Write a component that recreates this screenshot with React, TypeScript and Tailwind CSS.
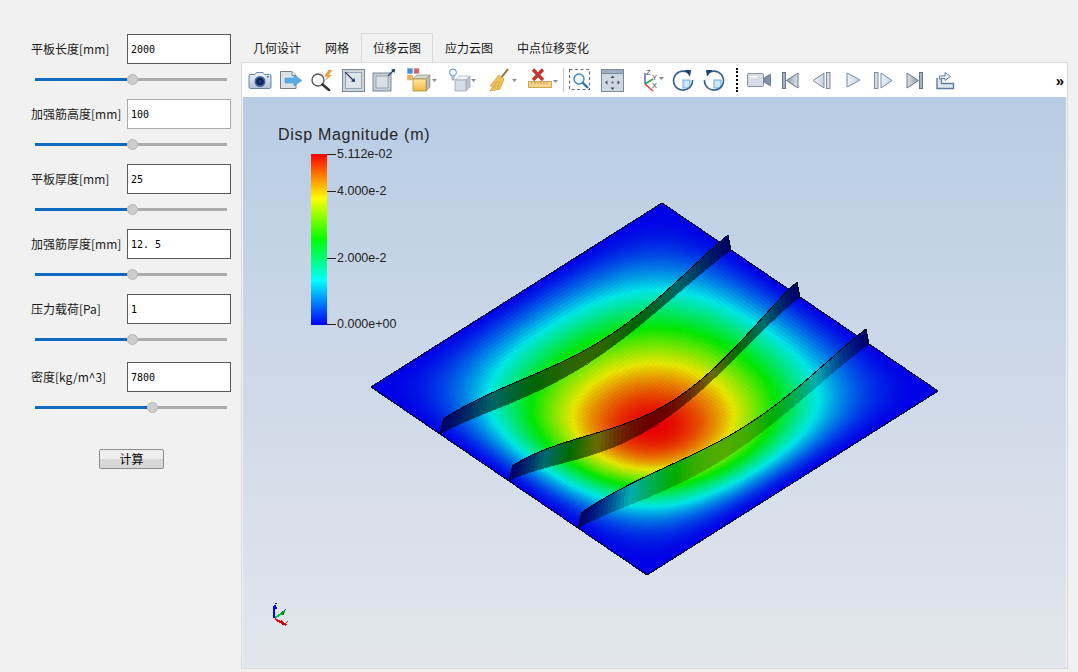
import type { ReactNode } from "react";

const params = [
  { label: "平板长度[mm]", value: "2000", fill: "w-[92px]", top: "mt-[34px]", border: "border-[#5a5a5a]" },
  { label: "加强筋高度[mm]", value: "100", fill: "w-[92px]", top: "mt-[14px]", border: "border-[#ababab]" },
  { label: "平板厚度[mm]", value: "25", fill: "w-[92px]", top: "mt-[14px]", border: "border-[#5a5a5a]" },
  { label: "加强筋厚度[mm]", value: "12. 5", fill: "w-[92px]", top: "mt-[14px]", border: "border-[#5a5a5a]" },
  { label: "压力载荷[Pa]", value: "1", fill: "w-[92px]", top: "mt-[14px]", border: "border-[#5a5a5a]" },
  { label: "密度[kg/m^3]", value: "7800", fill: "w-[112px]", top: "mt-[17px]", border: "border-[#5a5a5a]" },
];

const tabs = ["几何设计", "网格", "位移云图", "应力云图", "中点位移变化"];

// plate corners, in page pixels
const L = [371, 387];
const dS = [276, 188];
const dT = [291, -184];

const field = (s: number, t: number) => Math.pow(Math.max(0, Math.sin(Math.PI * s) * Math.sin(Math.PI * t)), 1.4);

function rainbow(w: number) {
  const stops = [
    [0, 0, 255],
    [0, 255, 255],
    [0, 255, 0],
    [255, 255, 0],
    [255, 0, 0],
  ];
  const x = Math.min(3.999, w * 4);
  const i = Math.floor(x);
  const f = x - i;
  return stops[i].map((c, k) => c + (stops[i + 1][k] - c) * f);
}

const toRgb = (c: number[], k: number) => `rgb(${Math.round(c[0] * k)},${Math.round(c[1] * k)},${Math.round(c[2] * k)})`;

function warp(s: number, t: number) {
  return [L[0] + s * dS[0] + t * dT[0], L[1] + s * dS[1] + t * dT[1] + 37 * field(s, t)];
}

function PlateMesh() {
  const n = 110;
  const quads: ReactNode[] = [];
  for (let i = 0; i < n; i++) {
    for (let j = 0; j < n; j++) {
      const s0 = i / n;
      const s1 = (i + 1) / n;
      const t0 = j / n;
      const t1 = (j + 1) / n;
      const pts = [warp(s0, t0), warp(s1, t0), warp(s1, t1), warp(s0, t1)].map((p) => p.join(",")).join(" ");
      const col = toRgb(rainbow(field((s0 + s1) / 2, (t0 + t1) / 2)), 0.9);
      quads.push(<polygon key={`${i}-${j}`} points={pts} fill={col} stroke={col} strokeWidth={1.2} />);
    }
  }
  return <g shapeRendering="crispEdges">{quads}</g>;
}

function Rib({ s, shade }: { s: number; shade: (t: number) => number }) {
  const m = 70;
  const top = (t: number) => {
    const b = warp(s, t);
    const h = 15 + 6 * Math.sin(Math.PI * s) * Math.sin(2 * Math.PI * t) + 20 * Math.max(0, s - 0.5) * Math.sin(Math.PI * t);
    return [b[0] + 3.5 - 6.5 * t, b[1] - h];
  };
  const quads: ReactNode[] = [];
  for (let j = 0; j < m; j++) {
    const t0 = j / m;
    const t1 = (j + 1) / m;
    const pts = [warp(s, t0), warp(s, t1), top(t1), top(t0)].map((p) => p.join(",")).join(" ");
    const mid = (t0 + t1) / 2;
    const col = toRgb(rainbow(field(s, mid)), shade(mid));
    quads.push(<polygon key={j} points={pts} fill={col} stroke={col} strokeWidth={0.8} />);
  }
  const line: number[][] = [warp(s, 0)];
  for (let j = 0; j <= m; j++) line.push(top(j / m));
  line.push(warp(s, 1));
  return (
    <g shapeRendering="crispEdges">
      {quads}
      <polyline points={line.map((p) => p.join(",")).join(" ")} fill="none" stroke="#0c0c1c" strokeWidth={1} />
    </g>
  );
}

function Scene() {
  return (
    <svg className="absolute inset-0" width={823} height={571} viewBox="243 97 823 571">
      <PlateMesh />
      <polygon points="371,387 647,575 938,391 662,203" fill="none" stroke="#0a0a22" strokeWidth={1} shapeRendering="crispEdges" />
      <Rib s={0.25} shade={() => 0.4} />
      <Rib s={0.5} shade={() => 0.42} />
      <Rib s={0.75} shade={(t) => 0.42 + 0.26 * Math.min(1, Math.sin(Math.PI * t) * 2)} />
      <g shapeRendering="crispEdges">
        <path d="M274 606V618" stroke="#0000ff" strokeWidth={2} />
        <path d="M272.500 609L275 604L277.500 609Z" fill="#0000e0" />
        <path d="M275 603h2v1h-2z" fill="#0000c0" />
        <path d="M275 618L285 611" stroke="#00c832" strokeWidth={2} />
        <path d="M280 613L286 609L283 616Z" fill="#008c28" />
        <path d="M275 619L286 625" stroke="#e01010" strokeWidth={2} />
        <path d="M281 620L288 625L282 625Z" fill="#d00000" />
        <path d="M286 622h1v1h-1zM287 621h1v1h-1z" fill="#d02020" />
      </g>
    </svg>
  );
}

function Legend() {
  const ticks = [
    { y: "top-[57px]", text: "5.112e-02" },
    { y: "top-[94px]", text: "4.000e-2" },
    { y: "top-[161px]", text: "2.000e-2" },
    { y: "top-[227px]", text: "0.000e+00" },
  ];
  return (
    <>
      <div className="absolute left-[35px] top-[28px] font-['Liberation_Sans',sans-serif] text-[16px] leading-[20px] tracking-[0.7px] text-[#262626] whitespace-nowrap">
        Disp Magnitude (m)
      </div>
      <div className="absolute left-[68px] top-[57px] w-[16px] h-[171px] bg-[linear-gradient(to_top,#0000ff_0%,#00ffff_26%,#00ff00_50%,#ffff00_74%,#ff0000_100%)]" />
      {ticks.map((tick) => (
        <div key={tick.text} className={`absolute left-[84px] ${tick.y} flex items-center h-[1px]`}>
          <div className="w-[9px] h-[1px] bg-[#222222]" />
          <span className="ml-[1px] font-['Liberation_Sans',sans-serif] text-[12.500px] text-[#222222] whitespace-nowrap">{tick.text}</span>
        </div>
      ))}
    </>
  );
}

function Param({ item }: { item: (typeof params)[number] }) {
  return (
    <div className={item.top}>
      <div className="flex items-center pl-[31px]">
        <div className="w-[96px] text-[12px] text-[#1a1a1a] whitespace-nowrap">{item.label}</div>
        <div className={`w-[104px] h-[30px] border bg-white flex items-center pl-[3px] font-['DejaVu_Sans_Mono',monospace] text-[10px] text-black ${item.border}`}>
          {item.value}
        </div>
      </div>
      <div className="flex items-center mt-[10px] ml-[35px] w-[192px] h-[11px]">
        <div className={`${item.fill} h-[3px] bg-[#0f69bd]`} />
        <div className="w-[11px] h-[11px] rounded-full bg-[#cdcdcd] border border-[#b3b3b3] shrink-0" />
        <div className="flex-1 h-[3px] bg-[#acacac]" />
      </div>
    </div>
  );
}

const Arrow = ({ x, y }: { x: number; y: number }) => <path d={`M${x} ${y}h5l-2.500 3z`} fill="#8a8a8a" />;

function Defs() {
  return (
    <svg width={0} height={0} className="absolute">
      <defs>
        <linearGradient id="steel" x1="0" y1="0" x2="0" y2="1">
          <stop offset="0" stopColor="#eef2f7" />
          <stop offset="1" stopColor="#b2c0d2" />
        </linearGradient>
        <linearGradient id="grayFill" x1="0" y1="0" x2="1" y2="0">
          <stop offset="0" stopColor="#8d98a8" />
          <stop offset="1" stopColor="#dfe4ea" />
        </linearGradient>
        <linearGradient id="grayFillR" x1="1" y1="0" x2="0" y2="0">
          <stop offset="0" stopColor="#8d98a8" />
          <stop offset="1" stopColor="#dfe4ea" />
        </linearGradient>
        <linearGradient id="paleFill" x1="0" y1="0" x2="1" y2="0">
          <stop offset="0" stopColor="#eef2f7" />
          <stop offset="1" stopColor="#c6d2e0" />
        </linearGradient>
        <linearGradient id="gold" x1="0" y1="0" x2="0" y2="1">
          <stop offset="0" stopColor="#ffe9a0" />
          <stop offset="1" stopColor="#f2b93e" />
        </linearGradient>
      </defs>
    </svg>
  );
}

const icons: { w: string; node: ReactNode }[] = [
  {
    w: "w-[30px]",
    node: (
      <svg width={24} height={20} viewBox="0 0 24 20">
        <path d="M2.500 4.500H7L8.500 2.500H15L16.500 4.500H21.500Q23 4.500 23 6V17Q23 18.500 21.500 18.500H2.500Q1 18.500 1 17V6Q1 4.500 2.500 4.500Z" fill="url(#steel)" stroke="#6583a8" />
        <circle cx={12} cy={11.500} r={5.500} fill="#3a6ba5" />
        <circle cx={12} cy={11.500} r={3.800} fill="#0d2450" />
        <circle cx={12} cy={11.500} r={1.500} fill="#1f4683" />
        <rect x={19} y={6} width={2} height={1.500} fill="#5c6f88" />
      </svg>
    ),
  },
  {
    w: "w-[32px]",
    node: (
      <svg width={24} height={20} viewBox="0 0 24 20">
        <path d="M1.500 1.500H13L17 5.500V18.500H1.500Z" fill="#dde1e6" stroke="#77808a" />
        <path d="M13 1.500V5.500H17" fill="#f3f3f3" stroke="#77808a" />
        <path d="M6 8H15V4.800L23 10.500L15 16V13H6Z" fill="#58ace6" stroke="#4f9ddb" strokeWidth={0.6} />
      </svg>
    ),
  },
  {
    w: "w-[30px]",
    node: (
      <svg width={24} height={22} viewBox="0 0 24 22">
        <circle cx={8} cy={11} r={6} fill="#f8fafc" stroke="#5b5b5b" strokeWidth={1.400} />
        <path d="M12.500 15.500L19 21" stroke="#333333" strokeWidth={2.600} strokeLinecap="round" />
        <path d="M18.500 1L14 7.500H17.500L14.500 12L22 6H18.500L22.500 1Z" fill="#ee9e36" />
      </svg>
    ),
  },
  {
    w: "w-[32px]",
    node: (
      <svg width={23} height={23} viewBox="0 0 23 23">
        <rect x={0.500} y={0.500} width={22} height={22} fill="#ccd4de" stroke="#7d8998" />
        <rect x={3.500} y={3.500} width={16} height={16} fill="#dfe4ea" stroke="#98a4b2" />
        <path d="M3 3L12 12" stroke="#27406b" strokeWidth={1.200} />
        <path d="M9 12.500L13 13L12.500 9Z" fill="#1d3560" />
      </svg>
    ),
  },
  {
    w: "w-[26px]",
    node: (
      <svg width={24} height={24} viewBox="0 0 24 24" className="ml-[3px]">
        <rect x={1} y={5} width={18} height={18} fill="#c5ced9" stroke="#7a8797" />
        <rect x={4} y={8} width={12} height={12} fill="#dbe0e7" stroke="#98a4b2" />
        <path d="M16 8L22 2" stroke="#27406b" strokeWidth={1.200} />
        <path d="M19 1.500L23 1L22.500 5Z" fill="#1d3560" />
      </svg>
    ),
  },
  {
    w: "w-[50px]",
    node: (
      <svg width={30} height={24} viewBox="0 0 30 24" className="ml-[4px]">
        <rect x={0.500} y={0.500} width={5} height={5} fill="#3d8edb" stroke="#7aa7d0" strokeWidth={0.500} />
        <rect x={7} y={0.500} width={5} height={5} fill="#d9646a" stroke="#c39095" strokeWidth={0.500} />
        <rect x={0.500} y={7} width={5} height={5} fill="#f0b45a" stroke="#d3a667" strokeWidth={0.500} />
        <path d="M6 11L10 7H23L19 11Z" fill="#d8d5c4" stroke="#8e8e82" strokeWidth={0.700} />
        <path d="M19 11L23 7V19L19 23Z" fill="#b9b9b0" stroke="#8e8e82" strokeWidth={0.700} />
        <rect x={6} y={11} width={13} height={12} fill="url(#gold)" stroke="#a58c52" strokeWidth={0.800} />
        <Arrow x={25} y={11} />
      </svg>
    ),
  },
  {
    w: "w-[32px]",
    node: (
      <svg width={28} height={24} viewBox="0 0 28 24" className="ml-[2px]">
        <circle cx={5} cy={4.500} r={3.500} fill="#f2f6fb" stroke="#4d9ad6" />
        <path d="M4 8v4h2V8" fill="#c7cfd8" stroke="#7f8a96" strokeWidth={0.600} />
        <path d="M7 12L11 8H22L18 12Z" fill="#eef1f4" stroke="#a7b0ba" strokeWidth={0.700} />
        <path d="M18 12L22 8V19L18 23Z" fill="#bac3cd" stroke="#a0a9b3" strokeWidth={0.700} />
        <rect x={7} y={12} width={11} height={11} fill="#d6dce3" stroke="#a0a9b3" strokeWidth={0.800} />
        <Arrow x={23} y={11} />
      </svg>
    ),
  },
  {
    w: "w-[50px]",
    node: (
      <svg width={28} height={24} viewBox="0 0 28 24" className="ml-[2px]">
        <path d="M19 1L12 10" stroke="#9c6c2a" strokeWidth={2} />
        <path d="M10 7L15 11L11 21L1 23L4 18L1 18Z" fill="#f0c35a" stroke="#c59a3a" strokeWidth={0.700} />
        <path d="M8 13L5 20M11 13L8 21" stroke="#c59a3a" strokeWidth={0.700} />
        <Arrow x={23} y={11} />
      </svg>
    ),
  },
  {
    w: "w-[28px]",
    node: (
      <svg width={30} height={24} viewBox="0 0 30 24" className="ml-[3px]">
        <path d="M5 1.500L15 12M15 1.500L5 12" stroke="#c0392f" strokeWidth={3.400} />
        <rect x={0.500} y={13.500} width={23} height={6} fill="#f5d48a" stroke="#cfa75a" />
        <path d="M4 14v2M7 14v2M10 14v2M13 14v2M16 14v2M19 14v2" stroke="#a98540" strokeWidth={0.700} />
        <Arrow x={25} y={12} />
      </svg>
    ),
  },
  { w: "w-[16px]", node: <div className="w-[1px] h-[24px] bg-[#c9c9c9]" /> },
  {
    w: "w-[18px]",
    node: (
      <svg width={22} height={22} viewBox="0 0 22 22">
        <rect x={0.500} y={0.500} width={20} height={20} fill="none" stroke="#5f6d80" strokeWidth={1.200} strokeDasharray="3 2.500" />
        <circle cx={10} cy={10} r={5} fill="#f3f8fc" stroke="#3f87c4" strokeWidth={1.400} />
        <path d="M13.500 13.500L19 19" stroke="#2f6ea6" strokeWidth={2.400} />
      </svg>
    ),
  },
  {
    w: "w-[46px]",
    node: (
      <svg width={23} height={23} viewBox="0 0 23 23">
        <rect x={0.500} y={0.500} width={22} height={22} fill="#ced7e2" stroke="#7d8998" />
        <rect x={0.500} y={0.500} width={22} height={4} fill="#9dafc3" stroke="#7d8998" />
        <path d="M11.500 6.500l2 2.500h-4zM11.500 21l2-2.500h-4zM4 13.500l2.500-2v4zM19 13.500l-2.500-2v4z" fill="#33506f" />
        <circle cx={11.500} cy={13.500} r={1} fill="#33506f" />
      </svg>
    ),
  },
  {
    w: "w-[32px]",
    node: (
      <svg width={27} height={24} viewBox="0 0 27 24" className="ml-[1px]">
        <path d="M7 16V5" stroke="#2747a6" strokeWidth={1.200} />
        <path d="M7 16L15 11" stroke="#22a84e" strokeWidth={1.600} />
        <path d="M7 16L15 23" stroke="#e33a3a" strokeWidth={1.600} />
        <text x={8} y={7} fontSize={7.500} fontFamily="Liberation Sans, sans-serif" fill="#30405c">Z</text>
        <text x={14} y={12} fontSize={7.500} fontFamily="Liberation Sans, sans-serif" fill="#30405c">Y</text>
        <text x={14} y={20} fontSize={7.500} fontFamily="Liberation Sans, sans-serif" fill="#30405c">X</text>
        <Arrow x={21} y={9} />
      </svg>
    ),
  },
  {
    w: "w-[32px]",
    node: (
      <svg width={22} height={22} viewBox="0 0 22 22">
        <rect x={11} y={11} width={7} height={8} fill="#cfe6f8" stroke="#4d9ad6" strokeWidth={0.800} />
        <path d="M15 3A9.500 9.500 0 1 0 20.500 11" fill="none" stroke="#33608f" strokeWidth={1.600} />
        <path d="M12.500 1L19 1L18 7.500Z" fill="#1f3f70" />
      </svg>
    ),
  },
  {
    w: "w-[30px]",
    node: (
      <svg width={22} height={22} viewBox="0 0 22 22">
        <rect x={11} y={11} width={7} height={8} fill="#cfe6f8" stroke="#4d9ad6" strokeWidth={0.800} />
        <path d="M7 3A9.500 9.500 0 1 1 1.500 11" fill="none" stroke="#33608f" strokeWidth={1.600} />
        <path d="M9.500 1L3 1L4 7.500Z" fill="#1f3f70" />
      </svg>
    ),
  },
  { w: "w-[16px]", node: <div className="h-[24px] border-l-2 border-dotted border-black" /> },
  {
    w: "w-[28px]",
    node: (
      <svg width={24} height={14} viewBox="0 0 24 14">
        <rect x={0.500} y={0.500} width={16} height={13} rx={1.500} fill="#d6dde6" stroke="#8593a5" />
        <rect x={3} y={3} width={7} height={2} fill="#f4f6f9" />
        <path d="M17 5L23.500 1V13L17 9Z" fill="#7e90a8" stroke="#56687f" strokeWidth={0.700} />
      </svg>
    ),
  },
  {
    w: "w-[34px]",
    node: (
      <svg width={17} height={17} viewBox="0 0 17 17">
        <rect x={0.500} y={0.500} width={3} height={16} fill="#a8b4c3" stroke="#66778d" />
        <path d="M16 1V16L4.500 8.500Z" fill="url(#grayFill)" stroke="#66778d" />
      </svg>
    ),
  },
  {
    w: "w-[28px]",
    node: (
      <svg width={19} height={17} viewBox="0 0 19 17">
        <path d="M12 1V16L1 8.500Z" fill="url(#paleFill)" stroke="#7a8ba2" />
        <rect x={14.500} y={0.500} width={3.500} height={16} fill="#d6dee8" stroke="#7a8ba2" />
      </svg>
    ),
  },
  {
    w: "w-[36px]",
    node: (
      <svg width={15} height={16} viewBox="0 0 15 16">
        <path d="M1 1V15L14 8Z" fill="url(#paleFill)" stroke="#7a8ba2" />
      </svg>
    ),
  },
  {
    w: "w-[24px]",
    node: (
      <svg width={19} height={17} viewBox="0 0 19 17">
        <rect x={0.500} y={0.500} width={3.500} height={16} fill="#d6dee8" stroke="#7a8ba2" />
        <path d="M7 1V16L18 8.500Z" fill="url(#paleFill)" stroke="#7a8ba2" />
      </svg>
    ),
  },
  {
    w: "w-[38px]",
    node: (
      <svg width={17} height={17} viewBox="0 0 17 17">
        <path d="M1 1V16L12.500 8.500Z" fill="url(#grayFillR)" stroke="#66778d" />
        <rect x={13.500} y={0.500} width={3} height={16} fill="#a8b4c3" stroke="#66778d" />
      </svg>
    ),
  },
  {
    w: "w-[24px]",
    node: (
      <svg width={20} height={19} viewBox="0 0 20 19">
        <path d="M2 7V17.500H18.500V12.500H6.500V7" fill="#dfe7f0" stroke="#5a7ca3" strokeWidth={1.400} />
        <path d="M4.500 8V5H10V1.500L15.500 5.500L10 9.500V7.500H6.500V8Z" fill="#e8eff6" stroke="#5a7ca3" strokeWidth={1} />
      </svg>
    ),
  },
];

export default function App() {
  return (
    <div className="flex w-[1078px] h-[672px] overflow-hidden bg-[#f1f1f1] font-['Noto_Sans_CJK_SC',sans-serif]">
      <Defs />
      <div className="w-[241px] shrink-0 flex flex-col">
        {params.map((item) => (
          <Param key={item.label} item={item} />
        ))}
        <button className="mt-[36px] ml-[99px] w-[65px] h-[20px] rounded-[2px] border border-[#8c8c8c] bg-[linear-gradient(to_bottom,#eeeeee_0%,#eeeeee_50%,#d8d8d8_50%,#d8d8d8_100%)] text-[12px] leading-[18px] text-black">
          计算
        </button>
      </div>
      <div className="w-[827px] flex flex-col pt-[33px]">
        <div className="flex h-[29px] text-[12px] text-[#1a1a1a]">
          {tabs.map((tab) => (
            <div
              key={tab}
              className={
                tab === "位移云图"
                  ? "h-[30px] px-[11px] border border-[#d9d9d9] bg-[#f2f2f2] flex items-center whitespace-nowrap"
                  : "h-[29px] px-[12px] flex items-center whitespace-nowrap"
              }
            >
              {tab}
            </div>
          ))}
        </div>
        <div className="h-[607px] border border-[#d9d9d9] flex flex-col">
          <div className="h-[34px] bg-white flex items-center pl-[3px] shrink-0">
            {icons.map((icon, idx) => (
              <div key={idx} className={`${icon.w} h-[34px] flex items-center justify-center shrink-0 [&>svg]:shrink-0`}>
                {icon.node}
              </div>
            ))}
            <div className="ml-auto mr-[3px] font-['Liberation_Sans',sans-serif] text-[15px] font-bold text-black leading-none">»</div>
          </div>
          <div className="relative flex-1 mx-[1px] bg-linear-to-b from-[#b8cce4] to-[#e3e6ec]">
            <Scene />
            <Legend />
          </div>
        </div>
      </div>
    </div>
  );
}
